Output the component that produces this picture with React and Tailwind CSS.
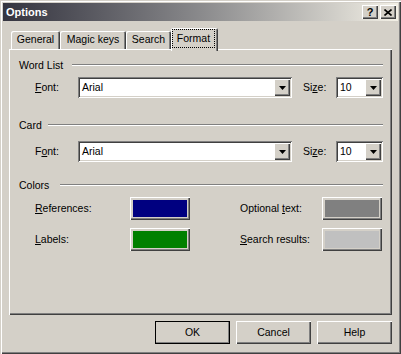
const raised =
  "shadow-[inset_1px_1px_#ffffff,inset_-1px_-1px_#404040,inset_-2px_-2px_#808080]";
const sunken =
  "shadow-[inset_1px_1px_#808080,inset_-1px_-1px_#ffffff,inset_2px_2px_#404040,inset_-2px_-2px_#d4d0c8]";

const Arrow = () => (
  <svg width="7" height="4" viewBox="0 0 7 4">
    <path d="M0 0h7L3.5 4z" fill="#000" />
  </svg>
);

const Combo = ({ value, className }) => (
  <div className={`flex h-[21px] items-center bg-white p-[2px] ${sunken} ${className}`}>
    <span className="flex-1 pl-[2px] leading-none text-black">{value}</span>
    <div className={`flex h-[17px] w-[16px] items-center justify-center bg-[#d4d0c8] ${raised}`}>
      <Arrow />
    </div>
  </div>
);

const GroupHeader = ({ title, textWidth, className }) => (
  <div className={`flex h-[12px] items-center ${className}`}>
    <span className={`shrink-0 leading-none ${textWidth}`}>{title}</span>
    <div className="h-[2px] flex-1 border-t border-b border-t-[#808080] border-b-white" />
  </div>
);

const ColorButton = ({ color }) => (
  <div className={`h-[23px] w-[60px] bg-[#d4d0c8] p-[3px] ${raised}`}>
    <div className={`h-full w-full ${color}`} />
  </div>
);

const Tab = ({ label, width }) => (
  <div
    className={`flex h-[18px] items-center justify-center rounded-t-[2px] bg-[#d4d0c8] shadow-[inset_1px_1px_#ffffff,inset_-1px_0_#404040,inset_-2px_0_#808080] ${width}`}
  >
    {label}
  </div>
);

const FontRow = ({ label, className }) => (
  <div className={`flex items-center pl-[16px] ${className}`}>
    <span className="w-[43px]">{label}</span>
    <Combo value="Arial" className="w-[214px]" />
    <span className="ml-[11px] w-[33px]">
      Si<u>z</u>e:
    </span>
    <Combo value="10" className="w-[47px]" />
  </div>
);

const DialogButton = ({ label, primary }) => (
  <div
    className={`flex h-[23px] w-[75px] items-center justify-center bg-[#d4d0c8] ${raised} ${
      primary ? "outline outline-1 -outline-offset-1 outline-black" : ""
    }`}
  >
    {label}
  </div>
);

export default function App() {
  return (
    <div className="flex h-[354px] w-[401px] flex-col bg-[#d4d0c8] p-[3px] font-['Liberation_Sans',Arial,sans-serif] text-[10.5px] text-black shadow-[inset_1px_1px_#d4d0c8,inset_2px_2px_#ffffff,inset_-1px_-1px_#404040,inset_-2px_-2px_#808080]">
      {/* title bar */}
      <div className="flex h-[18px] items-center justify-between bg-gradient-to-r from-[#34343f] via-[#8a8a8c] to-[#f3f0e6] pl-[3px] pr-[2px]">
        <span className="text-[11px] font-bold text-white">Options</span>
        <div className="flex gap-[2px]">
          <div className={`flex h-[14px] w-[16px] items-center justify-center bg-[#d4d0c8] text-[11px] font-bold leading-none ${raised}`}>
            ?
          </div>
          <div className={`flex h-[14px] w-[16px] items-center justify-center bg-[#d4d0c8] ${raised}`}>
            <svg width="8" height="7" viewBox="0 0 8 7">
              <path d="M0.5 0.5L7.5 6.5M7.5 0.5L0.5 6.5" stroke="#000" strokeWidth="1.6" />
            </svg>
          </div>
        </div>
      </div>

      <div className="mx-[6px] mt-[7px] flex flex-col">
        {/* tabs */}
        <div className="relative z-10 flex items-end pl-[2px]">
          <Tab label="General" width="w-[49px]" />
          <Tab label="Magic keys" width="w-[66px]" />
          <Tab label="Search" width="w-[45px]" />
          <div className="-mb-[2px] h-[23px] w-[47px] rounded-t-[2px] bg-[#d4d0c8] pb-[3px] pl-[1px] pr-[3px] pt-[1px] shadow-[inset_1px_1px_#ffffff,inset_-1px_0_#404040,inset_-2px_0_#808080]">
            <div className="flex h-full w-full items-center justify-center border border-dotted border-black">
              Format
            </div>
          </div>
        </div>

        {/* panel */}
        <div className={`flex h-[266px] flex-col pl-[10px] pr-[9px] pt-[10px] ${raised}`}>
          <GroupHeader title="Word List" textWidth="w-[53px]" />
          <FontRow
            className="mt-[6px]"
            label={
              <>
                <u>F</u>ont:
              </>
            }
          />
          <GroupHeader title="Card" textWidth="w-[29px]" className="mt-[21px]" />
          <FontRow
            className="mt-[10px]"
            label={
              <>
                F<u>o</u>nt:
              </>
            }
          />
          <GroupHeader title="Colors" textWidth="w-[41px]" className="mt-[17px]" />
          <div className="mt-[6px] flex items-center pl-[16px]">
            <span className="w-[95px]">
              <u>R</u>eferences:
            </span>
            <ColorButton color="bg-[#000080]" />
            <span className="ml-[50px] w-[82px]">
              Optional <u>t</u>ext:
            </span>
            <ColorButton color="bg-[#808080]" />
          </div>
          <div className="mt-[8px] flex items-center pl-[16px]">
            <span className="w-[95px]">
              <u>L</u>abels:
            </span>
            <ColorButton color="bg-[#008000]" />
            <span className="ml-[50px] w-[82px]">
              <u>S</u>earch results:
            </span>
            <ColorButton color="bg-[#c0c0c0]" />
          </div>
        </div>

        {/* buttons */}
        <div className="mt-[6px] flex justify-end gap-[6px]">
          <DialogButton label="OK" primary />
          <DialogButton label="Cancel" />
          <DialogButton label="Help" />
        </div>
      </div>
    </div>
  );
}
